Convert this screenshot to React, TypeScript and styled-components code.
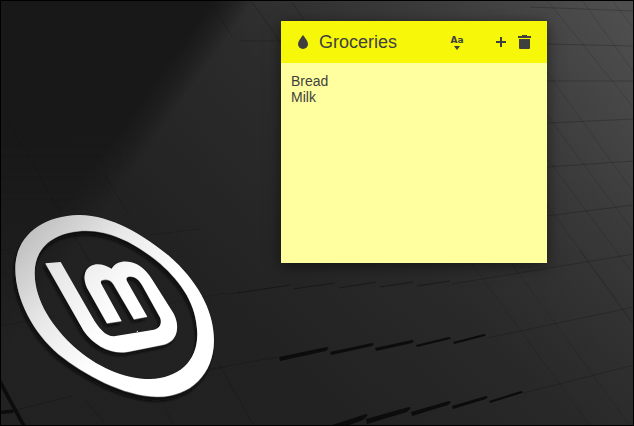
import React, { useState } from "react";
import styled, { createGlobalStyle } from "styled-components";

const GlobalStyle = createGlobalStyle`
  * { box-sizing: border-box; }
  body { margin: 0; background: #000; font-family: "Liberation Sans", Arial, sans-serif; }
`;

const Desktop = styled.main`
  position: relative;
  display: flex;
  justify-content: flex-end;
  align-items: flex-start;
  min-height: 100vh;
  padding: 20px 86px;
  border: 1px solid #000;
  overflow: hidden;
`;

const Backdrop = styled.svg`
  position: absolute;
  inset: -1px;
  width: calc(100% + 2px);
  height: calc(100% + 2px);
`;

const Note = styled.section`
  position: relative;
  display: flex;
  flex-direction: column;
  flex: 0 1 266px;
  color: #3f3f3f;
  background: #ffff9f;
  box-shadow: 0 3px 14px rgba(0, 0, 0, 0.5);
`;

const NoteHeader = styled.header`
  display: flex;
  align-items: center;
  height: 42px;
  padding: 0 10px;
  background: #f7f709;
`;

const NoteTitle = styled.h1`
  flex: 1;
  margin: 0 0 0 4px;
  font-size: 18px;
  line-height: 24px;
  font-weight: 400;
`;

const IconButton = styled.button<{ $gapAfter?: number }>`
  display: flex;
  flex-direction: column;
  align-items: center;
  justify-content: center;
  width: 24px;
  height: 24px;
  margin: 0 ${(p) => p.$gapAfter ?? 0}px 0 0;
  padding: 0;
  border: 0;
  color: inherit;
  background: none;
  cursor: pointer;
`;

const CaseLabel = styled.span`
  font: bold 9px/12px "DejaVu Sans", sans-serif;
`;

const NoteText = styled.textarea`
  display: block;
  width: 100%;
  height: 200px;
  padding: 10px;
  border: 0;
  outline: 0;
  resize: none;
  color: inherit;
  background: transparent;
  font: 14px/16px "Liberation Sans", Arial, sans-serif;
`;

const emblemRing =
  "M235 45C330 43 435 107 510 170C585 236 642 325 642 420C642 523 570 592 470 590C370 588 254 525 176 463C100 398 46 298 46 205C46 110 125 47 235 45Z" +
  "M260 92C165 92 104 140 104 218C104 305 160 382 222 440C288 499 370 537 450 537C535 535 593 485 592 400C590 313 545 248 480 190C418 138 340 92 260 92Z";

const emblemLetters =
  "M136 190L182 186L277 352C296 385 316 409 342 409L462 389C480 386 487 369 480 352L428 258C415 234 400 227 385 230C378 232 378 237 382 245L442 350L402 358L340 252C332 238 316 236 305 241C301 244 302 249 306 256L365 363L321 370L261 263C249 236 251 210 272 198C293 187 316 196 335 206C346 187 369 181 394 187C420 193 439 213 455 236L520 339C543 382 531 425 490 434L385 455C333 464 283 437 251 392Z";

/* Each dash is a raised tile edge: left point, right point, thickness. */
const tileEdges: [number, number, number, number, number][] = [
  [279, 358, 329, 348, 3], [330, 353, 374, 344, 2], [375, 349, 414, 341, 2],
  [416, 346, 451, 338, 1], [453, 343, 486, 335, 1],
  [329, 427, 368, 415, 5], [366, 420, 411, 408, 4], [411, 413, 451, 402, 3],
  [452, 407, 488, 397, 2], [489, 402, 523, 392, 1],
];

const Wallpaper = () => (
  <Backdrop viewBox="0 0 634 426" preserveAspectRatio="xMidYMid slice" aria-hidden="true">
    <defs>
      <linearGradient id="floor" gradientUnits="userSpaceOnUse" x1="610" y1="0" x2="230" y2="330">
        <stop offset="0" stopColor="#4e4e4e" />
        <stop offset="0.28" stopColor="#3c3c3c" />
        <stop offset="0.62" stopColor="#2b2b2b" />
        <stop offset="1" stopColor="#222" />
      </linearGradient>
      <linearGradient id="shade" gradientUnits="userSpaceOnUse" x1="140" y1="100" x2="168" y2="120">
        <stop offset="0" stopColor="#181818" />
        <stop offset="0.6" stopColor="#181818" stopOpacity="0.5" />
        <stop offset="1" stopColor="#181818" stopOpacity="0" />
      </linearGradient>
      <linearGradient id="lower" x1="0" y1="0" x2="0" y2="1">
        <stop offset="0.4" stopColor="#202020" stopOpacity="0" />
        <stop offset="1" stopColor="#202020" stopOpacity="0.3" />
      </linearGradient>
      <linearGradient id="fade" x1="0" y1="0" x2="0" y2="1">
        <stop offset="0.3" stopColor="#fff" />
        <stop offset="0.9" stopColor="#000" />
      </linearGradient>
      <mask id="fadeMask"><rect width="634" height="426" fill="url(#fade)" /></mask>
      <linearGradient id="metal" gradientUnits="userSpaceOnUse" x1="70" y1="110" x2="380" y2="390">
        <stop offset="0" stopColor="#c0c0c0" />
        <stop offset="0.5" stopColor="#e8e8e8" />
        <stop offset="1" stopColor="#fff" />
      </linearGradient>
      <linearGradient id="letters" gradientUnits="userSpaceOnUse" x1="150" y1="190" x2="350" y2="350">
        <stop offset="0" stopColor="#e4e4e4" />
        <stop offset="1" stopColor="#fff" />
      </linearGradient>
      <filter id="soft"><feGaussianBlur stdDeviation="4" /></filter>
    </defs>
    <rect width="634" height="426" fill="url(#floor)" />
    <rect width="634" height="426" fill="url(#lower)" />
    <g mask="url(#fadeMask)">
      <rect width="634" height="426" fill="url(#shade)" />
    </g>
    <g fill="none" stroke="#101010" strokeOpacity="0.25">
      <path d="M6 118L62 215M104 174L129 215M212 5L233 38M252 2L281 43M292 2L304 20M0 250L44 244M0 326L55 316M150 235L200 229M166 304L226 293M0 414L72 396M166 379L226 367M226 295L240 292M210 369L277 357M218 363L254 426M164 406L174 426M85 400L107 426M70 229L90 262" />
      <path d="M239 41H281M530 7L634 11M547 44L634 46M547 81H634M547 123L634 119M547 167L634 161M547 216L634 205M452 284L634 254M487 338L634 307M523 393L634 365" />
      <path d="M547 0L634 108M582 0L634 73M612 0L634 29M547 72L634 193M547 115L634 232M547 158L634 275M547 205L634 324M580 250L634 326M512 264L630 426M472 264L590 426" strokeOpacity="0.16" />
      <path d="M238 293L290 285M293 289L335 283M339 288L376 282M380 287L413 282M417 286L450 281" strokeOpacity="0.6" />
    </g>
    <g fill="#0c0c0c">
      {tileEdges.map(([x1, y1, x2, y2, t]) => (
        <path key={`${x1}-${y1}`} d={`M${x1} ${y1 - 1}L${x2 - 2} ${y2 - 1}L${x2} ${y2}L${x2 - t} ${y2 + t}L${x1 + 1} ${y1 + t}Z`} />
      ))}
      <path d="M0 378L26 426H22L0 386ZM0 411L15 409L13 413L0 414Z" />
    </g>
    <g transform="translate(0 200) scale(0.3333)" fillRule="evenodd">
      <g fill="#080808" filter="url(#soft)">
        <path d={emblemRing} transform="translate(-4 13)" />
        <path d={emblemLetters} transform="translate(-6 9)" />
      </g>
      <path d={emblemRing} fill="#777" transform="translate(0 2)" />
      <path d={emblemLetters} fill="#777" transform="translate(0 2)" />
      <path d={emblemRing} fill="url(#metal)" />
      <path d={emblemLetters} fill="url(#letters)" />
      <circle cx="412" cy="394" r="2" fill="#fff" />
    </g>
  </Backdrop>
);

const Droplet = () => (
  <svg width="16" height="16" viewBox="0 0 16 16" fill="currentColor" aria-hidden="true">
    <path d="M8 1C8 1 3 7 3 10A5 5 0 0 0 13 10C13 7 8 1 8 1Z" />
  </svg>
);

const Caret = () => (
  <svg width="6" height="4" viewBox="0 0 6 4" fill="currentColor" aria-hidden="true">
    <path d="M0 0H6L3 4Z" />
  </svg>
);

const Plus = () => (
  <svg width="16" height="16" viewBox="0 0 16 16" fill="currentColor" aria-hidden="true">
    <path d="M7 3H9V7H13V9H9V13H7V9H3V7H7Z" />
  </svg>
);

const Trash = () => (
  <svg width="16" height="16" viewBox="0 0 16 16" fill="currentColor" aria-hidden="true">
    <path d="M1 2H5V1H10V2H14V4H1ZM2 5H13V14Q13 15 12 15H3Q2 15 2 14Z" />
  </svg>
);

export default function App() {
  const [text, setText] = useState("Bread\nMilk");
  return (
    <>
      <GlobalStyle />
      <Desktop>
        <Wallpaper />
        <Note aria-labelledby="note-title">
          <NoteHeader>
            <IconButton type="button" aria-label="Note color"><Droplet /></IconButton>
            <NoteTitle id="note-title">Groceries</NoteTitle>
            <IconButton type="button" aria-label="Text format" $gapAfter={20}>
              <CaseLabel>Aa</CaseLabel>
              <Caret />
            </IconButton>
            <IconButton type="button" aria-label="New note"><Plus /></IconButton>
            <IconButton type="button" aria-label="Delete note"><Trash /></IconButton>
          </NoteHeader>
          <NoteText aria-labelledby="note-title" spellCheck={false} value={text} onChange={(e) => setText(e.target.value)} />
        </Note>
      </Desktop>
    </>
  );
}
